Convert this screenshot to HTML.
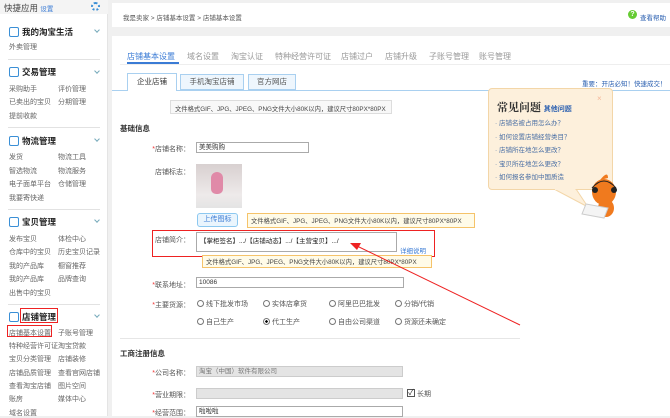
<!DOCTYPE html>
<html><head><meta charset="utf-8"><style>
*{margin:0;padding:0;box-sizing:border-box}
body{width:670px;height:416px;overflow:hidden;background:#f0f0f0;font-family:"Liberation Sans","Noto Sans CJK SC",sans-serif;font-size:7px;color:#333;position:relative}
.a{position:absolute;white-space:nowrap}
.sb{position:absolute;left:0;top:0;width:108px;height:416px;background:#fff;border-right:1px solid #e4e4e4}
.g{color:#666;font-size:7px}
.h{font-weight:bold;font-size:8.5px;color:#222}
.dv{position:absolute;left:8px;width:92px;height:1px;background:#e2e2e2}
.chev{position:absolute;left:95px;width:4px;height:4px;border-right:1px solid #7ab;border-bottom:1px solid #7ab;transform:rotate(45deg)}
.ic{position:absolute;left:9px;width:10px;height:10px;border:1.5px solid #3a8fd6;border-radius:2px}
.lbl{position:absolute;color:#555;text-align:right;width:70px;left:120px;font-size:7px}
.lbl b{color:#e33;font-weight:normal}
.in{position:absolute;border:1px solid #aaa;background:#fff;height:11px;font-size:6.5px;padding-left:2px;line-height:9px;color:#333}
.ye{position:absolute;border:1px solid #f5c36a;background:#fffbe8;font-size:6.3px;color:#444;padding:2px 3px;white-space:nowrap;overflow:hidden}
.rd{position:absolute;width:7px;height:7px;border:1px solid #777;border-radius:50%;background:#fff}
.rl{position:absolute;color:#555;font-size:7px;white-space:nowrap}
.tb{position:absolute;top:51px;font-size:8px;color:#999}
</style></head><body>
<div class="sb">
<div class="a" style="left:0;top:0;width:108px;height:14px;background:#f4f4f4"></div>
<div class="a" style="left:4px;top:2px;font-size:8.5px;color:#444">快捷应用 <span style="color:#3a7bd5;font-size:6.5px">设置</span></div>
<div class="a" style="left:91px;top:2px;width:9px;height:9px;border:2px dotted #3a8fd6;border-radius:50%"></div>
<div class="ic" style="top:27px"></div><div class="a h" style="left:22px;top:26px">我的淘宝生活</div><div class="chev" style="top:28px"></div>
<div class="a g" style="left:9px;top:42px">外卖管理</div>
<div class="dv" style="top:59px"></div>
<div class="ic" style="top:67px"></div><div class="a h" style="left:22px;top:66px">交易管理</div><div class="chev" style="top:69px"></div>
<div class="a g" style="left:9px;top:84px">采购助手</div><div class="a g" style="left:58px;top:84px">评价管理</div>
<div class="a g" style="left:9px;top:97px">已卖出的宝贝</div><div class="a g" style="left:58px;top:97px">分期管理</div>
<div class="a g" style="left:9px;top:111px">提前收款</div>
<div class="dv" style="top:127px"></div>
<div class="ic" style="top:136px"></div><div class="a h" style="left:22px;top:135px">物流管理</div><div class="chev" style="top:137px"></div>
<div class="a g" style="left:9px;top:152px">发货</div><div class="a g" style="left:58px;top:152px">物流工具</div>
<div class="a g" style="left:9px;top:166px">智选物流</div><div class="a g" style="left:58px;top:166px">物流服务</div>
<div class="a g" style="left:9px;top:179px">电子面单平台</div><div class="a g" style="left:58px;top:179px">仓储管理</div>
<div class="a g" style="left:9px;top:193px">我要寄快递</div>
<div class="dv" style="top:209px"></div>
<div class="ic" style="top:217px"></div><div class="a h" style="left:22px;top:216px">宝贝管理</div><div class="chev" style="top:218px"></div>
<div class="a g" style="left:9px;top:234px">发布宝贝</div><div class="a g" style="left:58px;top:234px">体检中心</div>
<div class="a g" style="left:9px;top:247px">仓库中的宝贝</div><div class="a g" style="left:58px;top:247px">历史宝贝记录</div>
<div class="a g" style="left:9px;top:261px">我的产品库</div><div class="a g" style="left:58px;top:261px">橱窗推荐</div>
<div class="a g" style="left:9px;top:274px">我的产品库</div><div class="a g" style="left:58px;top:274px">品牌查询</div>
<div class="a g" style="left:9px;top:288px">出售中的宝贝</div>
<div class="dv" style="top:304px"></div>
<div class="ic" style="top:312px"></div><div class="a h" style="left:22px;top:311px">店铺管理</div><div class="chev" style="top:313px"></div>
<div class="a" style="left:20px;top:308px;width:38px;height:15px;border:1.5px solid #e22"></div>
<div class="a" style="left:7px;top:325px;width:45px;height:12px;border:1.5px solid #e22"></div>
<div class="a g" style="left:9px;top:328px">店铺基本设置</div><div class="a g" style="left:58px;top:328px">子账号管理</div>
<div class="a g" style="left:9px;top:341px">特种经营许可证</div><div class="a g" style="left:58px;top:341px">淘宝贷款</div>
<div class="a g" style="left:9px;top:354px">宝贝分类管理</div><div class="a g" style="left:58px;top:354px">店铺装修</div>
<div class="a g" style="left:9px;top:368px">店铺品质管理</div><div class="a g" style="left:58px;top:368px">查看官网店铺</div>
<div class="a g" style="left:9px;top:381px">查看淘宝店铺</div><div class="a g" style="left:58px;top:381px">图片空间</div>
<div class="a g" style="left:9px;top:394px">账房</div><div class="a g" style="left:58px;top:394px">媒体中心</div>
<div class="a g" style="left:9px;top:408px">域名设置</div>
</div>
<div class="a" style="left:112px;top:3px;width:558px;height:24px;background:#fff"></div>
<div class="a" style="left:123px;top:12px;font-size:6.5px;color:#555">我是卖家 &gt; 店铺基本设置 &gt; 店铺基本设置</div>
<div class="a" style="left:628px;top:10px;width:9px;height:9px;border-radius:50%;background:#6c3;color:#fff;font-size:7px;text-align:center;line-height:9px;font-weight:bold">?</div>
<div class="a" style="left:640px;top:12px;font-size:6.5px;color:#2a5fb0">查看帮助</div>
<div class="a" style="left:112px;top:36px;width:558px;height:380px;background:#fff"></div>
<div class="tb" style="left:127px;color:#3a7bd5">店铺基本设置</div>
<div class="a" style="left:127px;top:62px;width:52px;height:2px;background:#3a7bd5"></div>
<div class="tb" style="left:187px">域名设置</div>
<div class="tb" style="left:231px">淘宝认证</div>
<div class="tb" style="left:275px">特种经营许可证</div>
<div class="tb" style="left:341px">店铺过户</div>
<div class="tb" style="left:385px">店铺升级</div>
<div class="tb" style="left:429px">子账号管理</div>
<div class="tb" style="left:479px">账号管理</div>
<div class="a" style="left:120px;top:64px;width:550px;height:1px;background:#eee"></div>
<div class="a" style="left:112px;top:90px;width:558px;height:1px;background:#a9d0f0"></div>
<div class="a" style="left:127px;top:73px;width:50px;height:18px;background:#fff;border:1px solid #a9d0f0;border-bottom:none;font-size:7.5px;text-align:center;line-height:16px;color:#333">企业店铺</div>
<div class="a" style="left:180px;top:74px;width:64px;height:16px;background:#eef6fd;border:1px solid #a9d0f0;font-size:7.5px;text-align:center;line-height:14px;color:#555">手机淘宝店铺</div>
<div class="a" style="left:248px;top:74px;width:48px;height:16px;background:#eef6fd;border:1px solid #a9d0f0;font-size:7.5px;text-align:center;line-height:14px;color:#555">官方网店</div>
<div class="a" style="left:582px;top:78px;font-size:6.5px;color:#2a5fb0">重要：开店必知！快速成交！</div>
<div class="a" style="left:170px;top:100px;width:222px;height:14px;background:#f8f8f8;border:1px solid #ddd;font-size:6.3px;color:#444;padding:3px 4px;white-space:nowrap;overflow:hidden">文件格式GIF、JPG、JPEG、PNG文件大小80K以内，建议尺寸80PX*80PX</div>
<div class="a" style="left:120px;top:123px;font-size:7.5px;font-weight:bold;color:#333">基础信息</div>
<div class="lbl" style="top:144px"><b>*</b>店铺名称：</div>
<div class="in" style="left:196px;top:142px;width:113px">美美购购</div>
<div class="lbl" style="top:167px">店铺标志：</div>
<div class="a" style="left:196px;top:164px;width:46px;height:44px;background:linear-gradient(#d8d0d0,#eeeaea 70%,#e4e4e4)"></div>
<div class="a" style="left:211px;top:172px;width:12px;height:22px;background:#e08aa8;border-radius:6px 6px 5px 5px"></div>
<div class="a" style="left:197px;top:213px;width:41px;height:14px;border:1px solid #8cc8f0;background:#eaf5fd;border-radius:3px;color:#3a7bd5;font-size:7px;text-align:center;line-height:12px">上传图标</div>
<div class="ye" style="left:247px;top:213px;width:228px;height:15px">文件格式GIF、JPG、JPEG、PNG文件大小80K以内，建议尺寸80PX*80PX</div>
<div class="a" style="left:152px;top:230px;width:283px;height:27px;border:1.5px solid #e22"></div>
<div class="lbl" style="top:235px">店铺简介：</div>
<div class="a" style="left:196px;top:232px;width:201px;height:20px;border:1px solid #aaa;font-size:6.5px;color:#222;padding:2px 3px;white-space:nowrap">【掌柜签名】.../【店铺动态】.../【主营宝贝】.../</div>
<div class="a" style="left:400px;top:245px;font-size:6.5px;color:#3a7bd5">详细说明</div>
<div class="ye" style="left:202px;top:255px;width:230px;height:13px;padding-top:1px">文件格式GIF、JPG、JPEG、PNG文件大小80K以内，建议尺寸80PX*80PX</div>
<div class="lbl" style="top:280px"><b>*</b>联系地址：</div>
<div class="in" style="left:196px;top:277px;width:208px">10086</div>
<div class="lbl" style="top:300px"><b>*</b>主要货源：</div>
<div class="rd" style="left:197px;top:300px"></div><div class="rl" style="left:206px;top:299px">线下批发市场</div>
<div class="rd" style="left:263px;top:300px"></div><div class="rl" style="left:272px;top:299px">实体店拿货</div>
<div class="rd" style="left:329px;top:300px"></div><div class="rl" style="left:338px;top:299px">阿里巴巴批发</div>
<div class="rd" style="left:395px;top:300px"></div><div class="rl" style="left:404px;top:299px">分销/代销</div>
<div class="rd" style="left:197px;top:318px"></div><div class="rl" style="left:206px;top:317px">自己生产</div>
<div class="rd" style="left:263px;top:318px;background:radial-gradient(#000 35%,#fff 40%)"></div><div class="rl" style="left:272px;top:317px">代工生产</div>
<div class="rd" style="left:329px;top:318px"></div><div class="rl" style="left:338px;top:317px">自由公司渠道</div>
<div class="rd" style="left:395px;top:318px"></div><div class="rl" style="left:404px;top:317px">货源还未确定</div>
<div class="a" style="left:120px;top:338px;width:400px;height:1px;background:#e6e6e6"></div>
<div class="a" style="left:120px;top:348px;font-size:7.5px;font-weight:bold;color:#333">工商注册信息</div>
<div class="lbl" style="top:368px"><b>*</b>公司名称：</div>
<div class="in" style="left:196px;top:366px;width:207px;background:#e4e4e4;border-color:#ccc;color:#777">淘宝（中国）软件有限公司</div>
<div class="lbl" style="top:390px"><b>*</b>营业期限：</div>
<div class="in" style="left:196px;top:388px;width:207px;background:#e4e4e4;border-color:#ccc"></div>
<div class="a" style="left:407px;top:389px;width:8px;height:8px;border:1px solid #555;font-size:8px;line-height:6px;text-align:center">✓</div>
<div class="a" style="left:417px;top:389px;color:#555">长期</div>
<div class="lbl" style="top:408px"><b>*</b>经营范围：</div>
<div class="in" style="left:196px;top:406px;width:207px">啦啦啦</div>
<svg class="a" style="left:0;top:0" width="670" height="416"><line x1="357" y1="246" x2="520" y2="325" stroke="#e22" stroke-width="1"/><polygon points="350,243 361,243 357,250" fill="#e22"/></svg>
<div class="a" style="left:488px;top:88px;width:125px;height:102px;background:#fdf0dc;border:1px solid #f3d6a8;border-radius:4px"></div>
<svg class="a" style="left:550px;top:189px" width="40" height="20"><polygon points="4,0 26,0 38,18" fill="#fdf0dc" stroke="#f3d6a8"/><rect x="5" y="-2" width="20" height="3" fill="#fdf0dc"/></svg>
<div class="a" style="left:597px;top:94px;color:#f5b89a;font-size:8px">×</div>
<div class="a" style="left:497px;top:99px;font-family:'Noto Serif CJK SC',serif;font-size:11px;font-weight:bold;color:#333">常见问题 <span style="font-family:'Liberation Sans','Noto Sans CJK SC',sans-serif;font-size:7px;color:#2a5fb0">其他问题</span></div>
<div class="a" style="left:495px;top:117px;font-size:6.5px;color:#4a6fa5;line-height:13.5px">· 店铺名被占用怎么办？<br>· 如何设置店铺经营类目？<br>· 店铺所在地怎么更改？<br>· 宝贝所在地怎么更改？<br>· 如何报名参加中国质造</div>
<svg class="a" style="left:578px;top:168px" width="50" height="52"><ellipse cx="26" cy="24" rx="12" ry="13" fill="#f07a1e"/><path d="M22 12 Q30 2 30 10" fill="#f07a1e"/><circle cx="17" cy="22" r="3" fill="#222"/><circle cx="36" cy="22" r="3" fill="#222"/><path d="M14 20 Q26 6 38 20" stroke="#222" fill="none"/><ellipse cx="28" cy="40" rx="8" ry="9" fill="#f07a1e"/><polygon points="8,36 30,40 26,50 4,46" fill="#f4f4f4" stroke="#ccc"/></svg>
</body></html>
